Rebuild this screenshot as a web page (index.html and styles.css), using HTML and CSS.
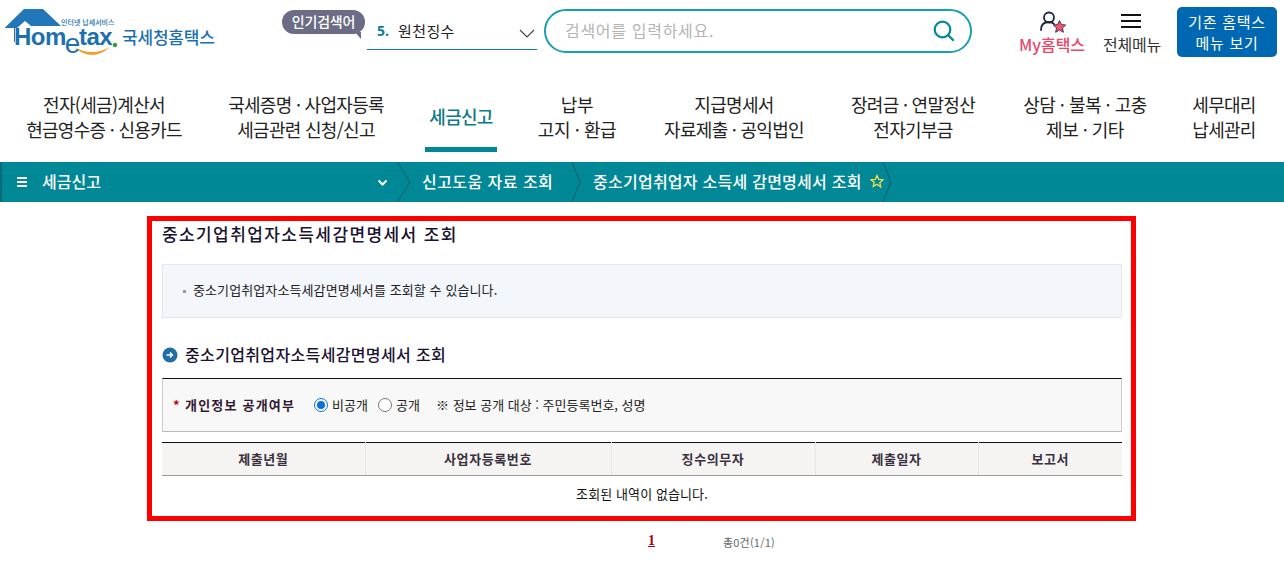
FILE: index.html
```html
<!DOCTYPE html>
<html lang="ko">
<head>
<meta charset="utf-8">
<title>국세청홈택스</title>
<link rel="stylesheet" href="styles.css">
</head>
<body>
<header class="top">
  <a class="logo">
    <svg class="logo-mark" width="120" height="60" viewBox="0 0 120 60">
      <path d="M5 27.500 L24 9 H43 L61 26 H31 L25 21 L17 28 H15 V42 H14 V28 H5 Z" fill="#2277b9"/>
      <path d="M74 47 Q92 63 110 47 Q92 57 74 47 Z" fill="#f0a030"/>
      <circle cx="115" cy="45" r="2.200" fill="#3a9a3a"/>
    </svg>
    <span class="logo-tag">인터넷 납세서비스</span>
    <span class="logo-word">Hom<span class="logo-e">e</span>tax</span>
    <span class="logo-kr">국세청홈택스</span>
  </a>
  <div class="popular">
    <span class="bubble">인기검색어</span>
    <div class="rank"><b>5.</b><span class="rank-text">원천징수</span>
      <svg class="chev" width="16" height="9" viewBox="0 0 16 9"><path d="M1 1l7 7 7-7" fill="none" stroke="#444" stroke-width="1.200"/></svg>
    </div>
  </div>
  <div class="search">
    <span class="placeholder">검색어를 입력하세요.</span>
    <svg width="24" height="24" viewBox="0 0 24 24"><circle cx="10.500" cy="10.500" r="7.800" fill="none" stroke="#008a96" stroke-width="2.200"/><path d="M16 16l5 5" stroke="#008a96" stroke-width="2.400" stroke-linecap="round"/></svg>
  </div>
  <div class="util">
    <a class="my">
      <svg width="30" height="24" viewBox="0 0 30 24"><circle cx="10" cy="6.500" r="5" fill="none" stroke="#1d2540" stroke-width="1.800"/><path d="M2 19c0-5 3-8 8-8 2 0 4 .6 5 2" fill="none" stroke="#1d2540" stroke-width="1.800" stroke-linecap="round"/><path d="M20.500 9.500l1.900 4 4.300.5-3.200 3 .9 4.300-3.900-2.200-3.900 2.200.9-4.300-3.200-3 4.300-.5z" fill="#f0586e" stroke="#1d2540" stroke-width=".8"/></svg>
      <span>My홈택스</span>
    </a>
    <a class="all">
      <span class="burger"><i></i><i></i><i></i></span>
      <span>전체메뉴</span>
    </a>
    <a class="old">기존 홈택스<br>메뉴 보기</a>
  </div>
</header>

<nav class="gnb">
  <a class="gnb-a w1">전자(세금)계산서<br>현금영수증 · 신용카드</a>
  <a class="gnb-a w2">국세증명 · 사업자등록<br>세금관련 신청/신고</a>
  <a class="gnb-a w3 on">세금신고</a>
  <a class="gnb-a w4">납부<br>고지 · 환급</a>
  <a class="gnb-a w5">지급명세서<br>자료제출 · 공익법인</a>
  <a class="gnb-a w6">장려금 · 연말정산<br>전자기부금</a>
  <a class="gnb-a w7">상담 · 불복 · 고충<br>제보 · 기타</a>
  <a class="gnb-a w8">세무대리<br>납세관리</a>
</nav>

<div class="crumb">
  <div class="crumb-home">
    <span class="mini-burger"><i></i><i></i><i></i></span>
    <span class="crumb-name">세금신고</span>
    <svg class="crumb-chev" width="11" height="8" viewBox="0 0 11 8"><path d="M1.500 1.500l4 4 4-4" fill="none" stroke="#fff" stroke-width="2"/></svg>
  </div>
  <svg class="sep" width="15" height="40" viewBox="0 0 15 40"><path d="M1 0l13 20L1 40" fill="none" stroke="#0d5a64"/></svg>
  <span class="crumb-b c1">신고도움 자료 조회</span>
  <svg class="sep" width="10" height="40" viewBox="0 0 10 40"><path d="M1 0l8 20-8 20" fill="none" stroke="#0d5a64"/></svg>
  <span class="crumb-b c2">중소기업취업자 소득세 감면명세서 조회</span>
  <svg class="star" width="14" height="14" viewBox="0 0 24 23"><path d="M12 2l3 6.800 7.300.8-5.500 4.900 1.600 7.200L12 17l-6.400 3.700 1.600-7.200L1.700 9.600 9 8.800z" fill="none" stroke="#f1e04a" stroke-width="2.200"/></svg>
  <svg class="sep" width="10" height="40" viewBox="0 0 10 40"><path d="M1 0l8 20-8 20" fill="none" stroke="#0d5a64"/></svg>
</div>

<main class="frame">
  <h1 class="title">중소기업취업자소득세감면명세서 조회</h1>
  <div class="notice"><span class="dot"></span><span class="notice-text">중소기업취업자소득세감면명세서를 조회할 수 있습니다.</span></div>
  <h2 class="sub">
    <svg width="16" height="16" viewBox="0 0 16 16"><circle cx="8" cy="8" r="7.500" fill="#1f6ea8"/><path d="M4.500 8h6M8 5.500L10.500 8 8 10.500" fill="none" stroke="#fff" stroke-width="1.300"/></svg>
    중소기업취업자소득세감면명세서 조회
  </h2>
  <div class="form">
    <span class="req">*</span><span class="label">개인정보 공개여부</span>
    <span class="radio checked"></span><span class="opt o1">비공개</span>
    <span class="radio"></span><span class="opt o2">공개</span>
    <span class="info">※ 정보 공개 대상 : 주민등록번호, 성명</span>
  </div>
  <table class="grid">
    <colgroup><col class="c-a"><col class="c-b"><col class="c-c"><col class="c-d"><col class="c-e"></colgroup>
    <thead><tr><th>제출년월</th><th>사업자등록번호</th><th>징수의무자</th><th>제출일자</th><th>보고서</th></tr></thead>
    <tbody><tr><td colspan="5">조회된 내역이 없습니다.</td></tr></tbody>
  </table>
</main>
<div class="pager"><b class="page">1</b><span class="total">총0건(1/1)</span></div>
</body>
</html>
```
FILE: styles.css
```css
* { box-sizing: border-box; }
html, body { margin: 0; padding: 0; }
body { width: 1284px; height: 561px; overflow: hidden; background: #fff; color: #222; font-family: "Noto Sans CJK KR", "Noto Sans", sans-serif; }
i { display: block; }

.top { height: 72px; display: flex; position: relative; }
.logo { position: relative; width: 282px; display: block; color: #1d70b0; }
.logo-mark { position: absolute; left: 0; top: 0; }
.logo-tag { position: absolute; left: 61px; top: 17px; font-size: 7px; line-height: 10px; white-space: nowrap; font-weight: 500; }
.logo-word { position: absolute; left: 14px; top: 21px; font: 700 24px/30px "Liberation Sans", sans-serif; letter-spacing: -.5px; white-space: nowrap; }
.logo-e { font-size: 28px; position: relative; top: 8px; font-weight: 400; margin: 0 -1px; }
.logo-kr { position: absolute; left: 122px; top: 25px; font-size: 17px; line-height: 24px; font-weight: 500; letter-spacing: -.2px; white-space: nowrap; }

.popular { width: 263px; position: relative; }
.bubble { position: absolute; left: 0; top: 10px; width: 83px; height: 24px; border-radius: 12px; background: #6a6d85; color: #fff; font-size: 14px; line-height: 23px; text-align: center; font-weight: 500; letter-spacing: -.2px; }
.bubble::after { content: ""; position: absolute; right: 4px; bottom: -5px; border-top: 7px solid #6a6d85; border-left: 6px solid transparent; }
.rank { position: absolute; left: 85px; top: 14px; width: 170px; height: 36px; border-bottom: 1px solid #10808c; display: flex; align-items: center; font-size: 15px; padding: 0 0 2px 10px; }
.rank b { color: #0d8090; width: 21px; font: 700 14px "Noto Sans", sans-serif; }
.rank-text { color: #222; letter-spacing: .4px; }
.chev { position: absolute; right: 2px; top: 15px; }

.search { position: absolute; left: 544px; top: 9px; width: 428px; height: 44px; border: 2px solid #17a0ae; border-radius: 22px; display: flex; align-items: center; justify-content: space-between; padding: 0 14px 0 19px; }
.placeholder { font-size: 16px; color: #b4b4b4; letter-spacing: .7px; padding-bottom: 2px; }

.util { position: absolute; left: 1017px; top: 0; display: flex; }
.my, .all { display: flex; flex-direction: column; align-items: center; font-size: 16px; line-height: 20px; white-space: nowrap; }
.my { width: 70px; padding-top: 11px; color: #e8486a; font-weight: 500; }
.my svg { margin-left: 3px; margin-bottom: -1px; height: 24px; }
.all { width: 60px; margin-left: 15px; padding-top: 14px; color: #333; letter-spacing: -.2px; }
.burger { width: 20px; height: 14px; display: flex; flex-direction: column; justify-content: space-between; margin: 0 3px 6px 0; }
.burger i { height: 2px; background: #111; }
.old { width: 100px; height: 50px; margin-left: 15px; margin-top: 7px; border-radius: 5px; background: #0068b3; color: #fff; font-size: 15px; line-height: 21px; text-align: center; padding-top: 4px; letter-spacing: .7px; white-space: nowrap; }

.gnb { height: 90px; display: flex; font-size: 18px; line-height: 25px; color: #222; letter-spacing: -.7px; text-align: center; }
.gnb-a { position: relative; display: block; padding-top: 20px; white-space: nowrap; }
.w1 { width: 208px; }
.w2 { width: 196px; }
.w3 { width: 72px; margin-left: 21px; padding-top: 32px; color: #0d7a88; font-weight: 500; }
.w3::after { content: ""; position: absolute; left: 0; right: 0; top: 75px; height: 5px; background: #008896; }
.w4 { width: 160px; letter-spacing: -.4px; }
.w5 { width: 154px; }
.w6 { width: 204px; }
.w7 { width: 140px; letter-spacing: -.5px; }
.w8 { width: 120px; margin-left: 9px; }

.crumb { height: 40px; background: #008896; display: flex; align-items: center; color: #fff; font-size: 16px; font-weight: 500; border-left: 2px solid #0a6a76; }
.crumb-home { width: 394px; display: flex; align-items: center; }
.mini-burger { width: 10px; height: 10px; margin-left: 15px; display: flex; flex-direction: column; justify-content: space-between; }
.mini-burger i { height: 2px; background: #fff; }
.crumb-name { margin-left: 15px; padding-bottom: 3px; }
.crumb-chev { margin-left: auto; margin-right: 8px; margin-top: 2px; }
.sep { flex: none; height: 40px; }
.crumb-b { white-space: nowrap; padding-bottom: 3px; }
.c1 { margin-left: 11px; width: 149px; letter-spacing: .45px; }
.c2 { margin-left: 12px; width: 277px; letter-spacing: .25px; }
.star { margin-right: -2px; margin-top: -2px; }

.frame { width: 989px; height: 305px; margin: 14px 0 0 147px; border: 5px solid #f00; padding: 0 9px 0 10px; }
.title { margin: 0; height: 29px; font-size: 17px; line-height: 26px; font-weight: 500; color: #1a1230; letter-spacing: 1.400px; white-space: nowrap; }
.notice { margin-top: 14px; height: 54px; background: #f3f6fb; border: 1px solid #e2e7ee; display: flex; align-items: center; font-size: 13px; color: #222; padding-left: 20px; letter-spacing: .1px; }
.notice-text { padding-bottom: 3px; }
.dot { width: 3px; height: 3px; background: #999; margin-right: 7px; }
.sub { margin: 27px 0 0; height: 19px; display: flex; align-items: center; gap: 7px; font-size: 16px; line-height: 19px; font-weight: 500; color: #1a1230; letter-spacing: .35px; white-space: nowrap; }
.form { margin-top: 14px; height: 54px; background: #f8f8f8; border-top: 1px solid #111; border-left: 1px solid #ccc; border-right: 1px solid #ccc; border-bottom: 1px solid #bbb; display: flex; align-items: center; font-size: 13px; padding-left: 10px; }
.req { color: #c00; font-weight: 700; width: 12px; font-size: 13px; padding-bottom: 2px; }
.label { font-weight: 700; color: #331a33; width: 129px; letter-spacing: 1.200px; padding-bottom: 2px; white-space: nowrap; }
.radio { width: 14px; height: 14px; border: 1px solid #777; border-radius: 50%; background: #fff; margin-right: 4px; flex: none; }
.radio.checked { border: 1.500px solid #0b6fe0; position: relative; }
.radio.checked::after { content: ""; position: absolute; inset: 2px; border-radius: 50%; background: #0b6fe0; }
.opt, .info { padding-bottom: 2px; white-space: nowrap; }
.o1 { width: 46px; }
.o2 { width: 40px; }
.grid { margin-top: 10px; width: 960px; border-collapse: collapse; table-layout: fixed; font-size: 13px; border-top: 1px solid #111; }
.c-a { width: 203px; } .c-b { width: 246px; } .c-c { width: 204px; } .c-d { width: 163px; } .c-e { width: 144px; }
.grid th { height: 33px; background: #f5f4f2; font-weight: 700; color: #3a3040; border-left: 1px solid #e6e6e4; border-bottom: 1px solid #999; padding: 0 0 2px; letter-spacing: .6px; }
.grid th:first-child { border-left: 0; }
.grid td { height: 38px; text-align: center; padding: 0 0 2px; color: #111; letter-spacing: .1px; }

.pager { position: relative; height: 20px; font-size: 11px; color: #666; }
.page { position: absolute; left: 648px; top: 12px; font: 700 14px "Liberation Serif", serif; color: #a80020; text-decoration: underline; }
.total { position: absolute; left: 723px; top: 13px; letter-spacing: .2px; }
```
